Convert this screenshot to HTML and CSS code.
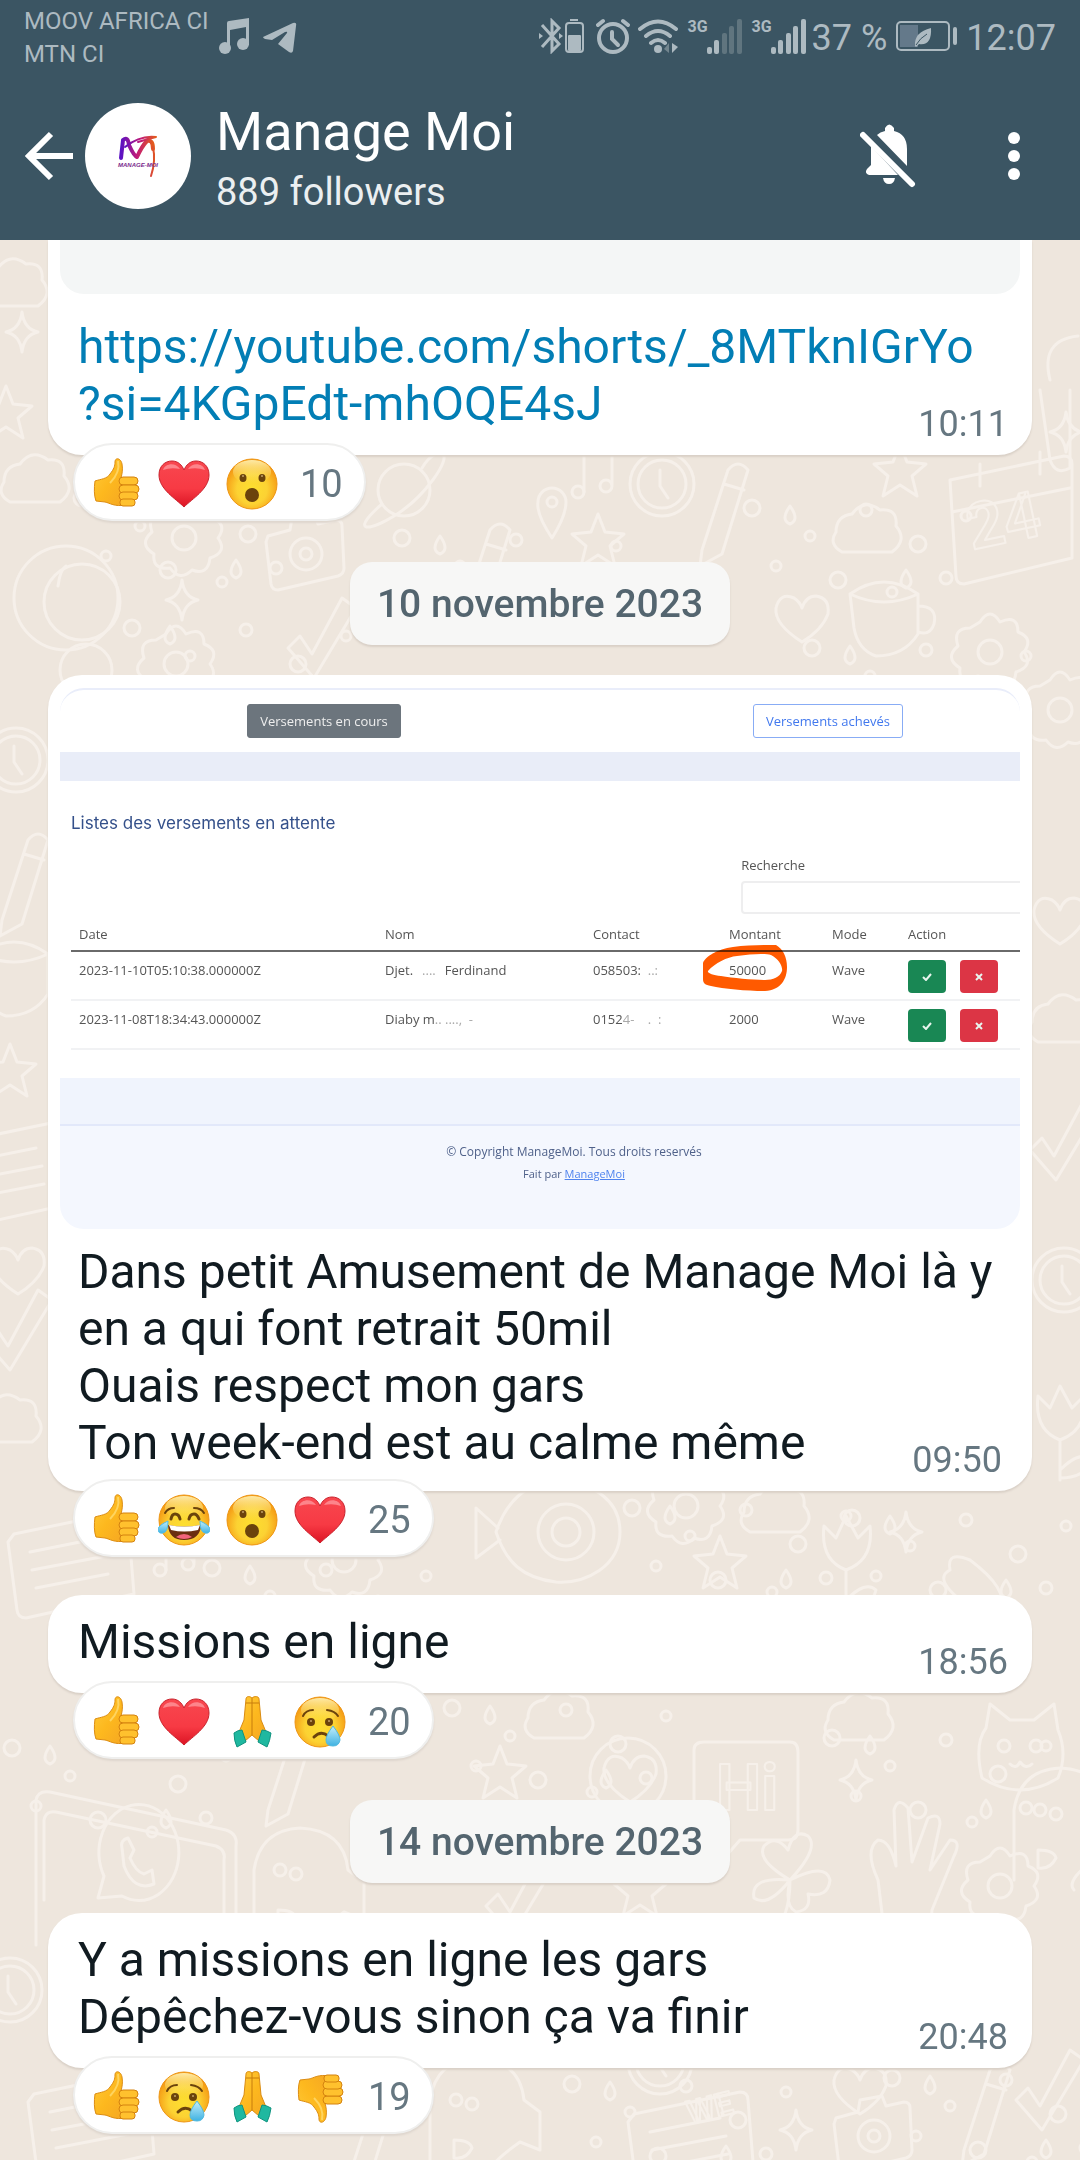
FILE: index.html
```html
<!DOCTYPE html>
<html lang="fr">
<head>
<meta charset="utf-8">
<meta name="viewport" content="width=device-width, initial-scale=1">
<title>Manage Moi</title>
<link rel="stylesheet" href="styles.css">
</head>
<body>
<svg class="defs" aria-hidden="true">
  <defs>
    <radialGradient id="face" cx=".5" cy=".6" r=".55"><stop offset="0" stop-color="#fddf2f"/><stop offset=".55" stop-color="#fcd233"/><stop offset="1" stop-color="#f59a14"/></radialGradient>
    <linearGradient id="shine" x1="0" y1="0" x2="0" y2="1"><stop offset="0" stop-color="#fff4b8" stop-opacity=".9"/><stop offset="1" stop-color="#fde75c" stop-opacity="0"/></linearGradient>
    <linearGradient id="skin" x1="0" y1="0" x2="1" y2="1"><stop offset="0" stop-color="#ffcb3a"/><stop offset=".5" stop-color="#fdb81e"/><stop offset="1" stop-color="#f5a623"/></linearGradient>
    <linearGradient id="red" x1="0" y1="0" x2="0" y2="1"><stop offset="0" stop-color="#f8474f"/><stop offset=".6" stop-color="#f73a44"/><stop offset="1" stop-color="#dc1424"/></linearGradient>
    <linearGradient id="water" x1="0" y1="0" x2="0" y2="1"><stop offset="0" stop-color="#c4eefb"/><stop offset="1" stop-color="#3fb2e2"/></linearGradient>
    <linearGradient id="brand" x1="0" y1="0" x2="1" y2="0"><stop offset="0" stop-color="#5a12c4"/><stop offset=".5" stop-color="#c11a78"/><stop offset="1" stop-color="#e35b1c"/></linearGradient>
    <symbol id="thumb" viewBox="0 0 52 52">
      <path d="M5 23C11 21 17 21 20 16C24 11 25 8 25 4C25 -1 31 0 32 6C33 12 32 16 31 20L36 21V47C24 49 20 45 15 44L6 43C4 38 4 30 5 23Z" fill="url(#skin)" stroke="#dc8c12"/>
      <path d="M28 3C30 12 26 19 20 25" fill="none" stroke="#ffe07a" stroke-width="2" opacity=".7"/>
      <g fill="#ffc12e" stroke="#d4820f" stroke-width="1"><rect x="29" y="19" width="19" height="8" rx="4"/><rect x="29" y="27" width="20" height="8" rx="4"/><rect x="29" y="34" width="19" height="8" rx="4"/><rect x="30" y="41" width="15" height="7" rx="3"/></g>
    </symbol>
    <symbol id="down" viewBox="0 0 52 52"><g transform="matrix(1 0 0 -1 0 52)"><use href="#thumb" width="52" height="52"/></g></symbol>
    <symbol id="heart" viewBox="0 0 52 52">
      <path d="M26 49C18 41 1 31 1 17C1 8 7 3 14 3C20 3 24 7 26 12C28 7 32 3 38 3C45 3 51 8 51 17C51 31 34 41 26 49Z" fill="url(#red)" stroke="#c9222c"/>
      <path d="M5 12C7 5 18 4 22 11Q13 9 5 12ZM30 11C34 4 45 5 47 12Q39 9 30 11Z" fill="#ff9ba0" opacity=".75"/>
    </symbol>
    <symbol id="ball" viewBox="0 0 52 52"><circle cx="26" cy="26" r="25" fill="url(#face)" stroke="#ee9614"/><ellipse cx="26" cy="14" rx="19" ry="12" fill="url(#shine)"/></symbol>
    <symbol id="wow" viewBox="0 0 52 52"><use href="#ball"/><g fill="#6b430c"><ellipse cx="17" cy="20" rx="3.500" ry="4"/><ellipse cx="36" cy="20" rx="3.500" ry="4"/><ellipse cx="26" cy="37" rx="7" ry="7"/></g><circle cx="17" cy="18" r="1" fill="#c2a06a"/><circle cx="36" cy="18" r="1" fill="#c2a06a"/></symbol>
    <symbol id="joy" viewBox="0 0 52 52"><use href="#ball"/>
      <g fill="none" stroke="#6b430c" stroke-width="2" stroke-linecap="round"><path d="M7 19Q10 14 16 14M36 14Q43 14 46 19"/><path d="M13 25Q14 20 17 20Q21 20 22 25M31 25Q32 20 36 20Q39 20 41 25" stroke-width="3"/></g>
      <path d="M10 31Q26 34 43 31Q42 46 26 46Q11 46 10 31Z" fill="#6b2f10"/><path d="M11 31Q26 34 42 31L40 36Q26 39 13 36Z" fill="#fff"/><path d="M18 43Q26 37 34 43Q26 47 18 43Z" fill="#f2647c"/>
      <path d="M10 27Q10 38 5 39Q0 40 0 35Q1 31 10 27ZM42 27Q42 38 47 39Q52 40 52 35Q51 31 42 27Z" fill="url(#water)" stroke="#52bde6"/>
    </symbol>
    <symbol id="cry" viewBox="0 0 52 52"><use href="#ball"/>
      <g fill="none" stroke="#6b430c" stroke-width="2" stroke-linecap="round"><path d="M9 20Q12 14 19 14M33 14Q41 15 44 20"/><path d="M20 41Q27 34 34 40" stroke-width="3"/></g>
      <g fill="#6b430c"><ellipse cx="17" cy="26" rx="4" ry="4"/><ellipse cx="35" cy="26" rx="4" ry="4"/></g><circle cx="17" cy="25" r="1" fill="#c2a06a"/><circle cx="35" cy="25" r="1" fill="#c2a06a"/>
      <path d="M39 30Q46 39 46 44Q45 50 39 50Q32 50 32 44Q32 39 39 30Z" fill="url(#water)" stroke="#52b9de"/>
    </symbol>
    <symbol id="pray" viewBox="0 0 52 52">
      <path d="M26 2C24 0 20 0 20 3L18 24L13 36L19 45L26 39L33 45L40 36L35 24L33 3C33 0 28 0 26 2Z" fill="url(#skin)" stroke="#d98b12"/><path d="M26 2V39M20 7H33" stroke="#c77c0d" fill="none"/>
      <path d="M8 37Q12 34 16 34L20 46L11 51Q8 45 8 37ZM45 37Q40 34 36 34L32 46L41 51Q44 45 45 37Z" fill="#1fb8a0" stroke="#0f937f"/>
    </symbol>
    <symbol id="bars" viewBox="0 0 36 36"><g fill="#adbac1"><rect x="1" y="29" width="5" height="7" rx="2"/><rect x="8" y="22" width="5" height="14" rx="2"/></g><g fill="currentColor"><rect x="16" y="15" width="5" height="21" rx="2"/><rect x="23" y="8" width="5" height="28" rx="2"/><rect x="31" y="1" width="5" height="35" rx="2"/></g></symbol>

    <g id="d-star"><path d="M0-26L7-8L26-6L12 6L17 26L0 15L-17 26L-12 6L-26-6L-7-8Z"/></g>
    <g id="d-spark"><path d="M0-20Q2-3 16 0Q2 3 0 20Q-2 3-16 0Q-2-3 0-20Z"/></g>
    <g id="d-planet"><circle r="26"/><path d="M-22 14C-52 40-40 44-10 26S48-32 38-36S18-22 18-22"/></g>
    <g id="d-camera"><path d="M-36-18L-14-24L-12-36L10-40L14-30L32-34Q38-34 38-28L40 14Q40 20 34 22L-26 36Q-32 36-33 30L-38-12Z"/><circle cx="2" cy="0" r="16"/><circle cx="2" cy="0" r="6"/></g>
    <g id="d-clock"><circle r="32"/><circle r="24"/><path d="M-2-14V2L6 14"/></g>
    <g id="d-cal"><path d="M-60-50L54-74Q62-74 62-66V28L-46 54Q-54 54-54 46ZM-58-18L60-42M-30-66V-44M30-78V-56"/></g>
    <g id="d-pin"><path d="M0 28Q-16 4-14-8A14 14 0 0 1 14-8Q14 6 0 28Z"/><circle cy="-8" r="5"/></g>
    <g id="d-cloud"><path d="M-26 22Q-40 14-32 2Q-32-14-16-16Q-4-32 12-20Q30-22 28-4Q40 10 24 22Z"/></g>
    <g id="d-mug"><path d="M-34-26Q0-50 34-26V14Q20 36-8 36Q-26 30-30 8ZM-34-26Q0-10 34-26M34-14Q54-14 50 4Q46 16 34 12"/></g>
    <g id="d-note"><path d="M-14 20V-24L14-30V12"/><circle cx="-20" cy="20" r="6"/><circle cx="8" cy="14" r="6"/></g>
    <g id="d-egg"><path d="M-70 0C-60-30-40-50-10-50C30-50 54-30 54 0C54 34 20 52-10 50C-44 46-60 30-70 0Z"/><circle r="28"/><circle r="14"/><path d="M-68-4L-90-24V26L-66 8"/></g>
    <g id="d-tulip"><path d="M0 20Q-26 10-22-24L-10-12L0-34L12-12L24-24Q28 10 0 20ZM0 20V60M0 50Q20 30 30 40Q26 58 0 58"/></g>
    <g id="d-heart"><path d="M0 24Q-28 6-26-10Q-22-26-8-20Q-2-16 0-10Q4-22 14-22Q28-20 26-4Q20 12 0 24Z"/></g>
    <g id="d-clover"><path d="M0 0Q-34-20-26-34Q-14-46-2-30Q4-52 18-44Q30-32 0 0Q36-18 40 0Q38 18 18 14Q22 30 6 32Q-6 26 0 0Q-22 28-36 18Q-40-4 0 0M0 0Q0 40-20 56"/></g>
    <g id="d-flower"><path d="M-10-30Q0-46 10-30Q28-38 28-20Q44-14 34 0Q44 14 26 20Q24 38 8 32Q-4 44-14 30Q-32 32-30 16Q-46 6-32-6Q-38-24-20-24Z"/><circle r="12"/></g>
    <g id="d-cat"><path d="M-38 30Q-46-4-34-20L-30-44L-10-28H14L34-44L38-18Q48 6 38 30Q0 54-38 30Z"/><circle cx="-16" cy="-2" r="6"/><circle cx="16" cy="-2" r="6"/><path d="M-10 16Q-4 22 0 14Q6 22 12 16"/></g>
    <g id="d-dino"><path d="M-50 50V-20Q-44-60-4-62Q40-60 44-20L60-8V30L40 22Q0 50 10 60"/><circle cx="-24" cy="-20" r="6"/><circle cx="-8" cy="-16" r="6"/><path d="M-26 20Q-10 20-8 28Q-14 40-26 38Z"/></g>
    <g id="d-hand"><path d="M-20 60L-26 10Q-40-20-26-30Q-14-30-8-4L-10-60Q-6-74 4-62L8-8L24-52Q36-58 36-46L26 0L46-30Q58-30 50-14L28 40L26 66Z"/></g>
    <g id="d-doc"><path d="M-56-26L50-48Q58-48 58-40L64 34L-44 58Q-52 58-53 50L-62-18ZM-40-8L30-22M-38 10L36-4M-34 28L38 14"/></g>
    <g id="d-tick"><path d="M-34 10L-22-2L-10 16L20-40L34-30L-8 40Z"/></g>
    <g id="d-pencil"><path d="M-16 40L10-40Q20-52 30-40L4 44L-18 56Z M6-26L26-20"/></g>
    <g id="d-set">
      <circle cx="12" cy="8" r="8"/><circle cx="70" cy="36" r="5"/><circle cx="126" cy="10" r="6"/><circle cx="178" cy="44" r="8"/><circle cx="226" cy="16" r="5"/><circle cx="36" cy="66" r="5"/><circle cx="98" cy="80" r="8"/><circle cx="152" cy="92" r="5"/><circle cx="206" cy="78" r="6"/><path d="M50 6Q60 20 50 24Q40 20 50 6ZM166 70Q176 84 166 88Q156 84 166 70Z"/>
    </g>
  </defs>
</svg>

<header class="top">
  <div class="status">
    <div class="carriers"><span>MOOV AFRICA CI</span><span>MTN CI</span></div>
    <svg class="s-note" viewBox="0 0 30 36" fill="#adbac1" aria-hidden="true"><path d="M8 5Q8 3 10 3L30 0V27H27V9L11 12V30H8Z"/><circle cx="6" cy="30" r="6"/><circle cx="24" cy="26" r="6"/></svg>
    <svg class="s-plane" viewBox="0 0 34 32" fill="#adbac1" aria-hidden="true"><path d="M0 15L30 1Q34 0 33 4L30 29Q29 32 26 30L15 22L24 11Q25 9 22 10L9 18L2 17Q0 16 0 15Z"/></svg>
    <div class="tray">
      <svg width="46" height="36" viewBox="0 0 46 36" aria-hidden="true"><path d="M3 7L20 26L13 33V3L20 10L3 29" fill="none" stroke="#adbac1" stroke-width="3"/><path d="M0 15L4 18L0 21ZM20 15L24 18L20 21Z" fill="#adbac1"/><rect x="27" y="5" width="17" height="29" rx="3" fill="none" stroke="#adbac1" stroke-width="2"/><rect x="29" y="17" width="13" height="16" rx="1" fill="#adbac1"/><rect x="31" y="1" width="8" height="2" fill="#adbac1"/></svg>
      <svg class="s-alarm" width="34" height="36" viewBox="0 0 34 36" aria-hidden="true"><g fill="none" stroke="#adbac1" stroke-linecap="round"><circle cx="17" cy="20" r="14" stroke-width="4"/><path d="M16 14V21L22 27" stroke-width="4"/><path d="M2 7L7 3M32 7L27 3" stroke-width="4"/></g></svg>
      <svg width="40" height="36" viewBox="0 0 40 36" aria-hidden="true"><g fill="none" stroke="#adbac1" stroke-width="4" stroke-linecap="round"><path d="M2 11Q20-4 38 11M8 18Q20 8 32 18M13 25Q20 19 27 25"/></g><circle cx="20" cy="31" r="4" fill="#adbac1"/><path d="M31 25V35L26 31Z" fill="#73868f"/><path d="M34 25V35L40 29Z" fill="#adbac1"/></svg>
      <span class="net net-weak"><b>3G</b><svg width="36" height="36" aria-hidden="true"><use href="#bars"/></svg></span>
      <span class="net"><b>3G</b><svg width="36" height="36" aria-hidden="true"><use href="#bars"/></svg></span>
      <span class="level">37 %</span>
      <svg width="62" height="32" viewBox="0 0 62 32" aria-hidden="true"><rect x="1" y="2" width="52" height="28" rx="4" fill="none" stroke="#adbac1" stroke-width="2"/><rect x="4" y="5" width="18" height="22" fill="#64798a"/><path d="M19 26Q18 12 35 8Q36 26 23 24L20 27Z" fill="#adbac1"/><path d="M20 25Q24 18 31 14" stroke="#3b5563" fill="none"/><rect x="57" y="7" width="4" height="18" rx="2" fill="#adbac1"/></svg>
      <time class="clock">12:07</time>
    </div>
  </div>
  <div class="bar">
    <button class="icon back" aria-label="Retour"><svg width="48" height="50" viewBox="0 0 48 50" aria-hidden="true"><path d="M26 3L4 25L26 47M4 25H48" fill="none" stroke="#fff" stroke-width="6"/></svg></button>
    <svg class="avatar" viewBox="0 0 106 106" aria-hidden="true">
      <circle cx="53" cy="53" r="53" fill="#fff"/>
      <g fill="none" stroke="url(#brand)" stroke-linecap="round" stroke-linejoin="round"><path d="M36 55L38 37Q43 33 44 42Q49 53 52 54Q57 43 62 38Q68 36 68 46" stroke-width="4"/><path d="M40 44Q55 32 71 34Q63 36 53 39M68 44Q71 58 66 73" stroke-width="2"/></g>
      <text x="33" y="64" class="logo-text">MANAGE-MOI</text>
    </svg>
    <div class="who"><h1>Manage Moi</h1><p>889 followers</p></div>
    <button class="icon bell" aria-label="Notifications désactivées"><svg width="56" height="64" viewBox="0 0 56 64" aria-hidden="true"><g fill="#fff"><path d="M25 7V4Q29-3 34 4V7Q47 10 47 25V42L17 11Q20 8 25 7Z"/><path d="M11 22L38 51H9Q4 49 7 45L11 41Z"/><path d="M23 54H35Q34 60 29 60Q24 60 23 54Z"/></g><path d="M3 11L52 60" stroke="#fff" stroke-width="6" stroke-linecap="round"/></svg></button>
    <button class="icon more" aria-label="Plus d’options"><svg width="12" height="50" viewBox="0 0 12 50" fill="#fff" aria-hidden="true"><circle cx="6" cy="7" r="6"/><circle cx="6" cy="25" r="6"/><circle cx="6" cy="43" r="6"/></svg></button>
  </div>
</header>

<main class="chat">
  <svg class="doodles" viewBox="0 0 1080 1920" preserveAspectRatio="xMidYMin slice" aria-hidden="true">
    <use href="#d-cloud" x="14" y="44"/><use href="#d-spark" x="22" y="92"/><use href="#d-star" x="6" y="172"/><use href="#d-cloud" x="36" y="240"/><use href="#d-flower" x="184" y="298"/><use href="#d-camera" x="304" y="314"/><use href="#d-planet" x="404" y="250"/><use href="#d-pencil" x="480" y="330"/><use href="#d-pin" x="552" y="270"/><use href="#d-star" x="598" y="300"/><use href="#d-note" x="598" y="232"/><use href="#d-clock" x="662" y="244"/><use href="#d-pencil" x="718" y="270"/><use href="#d-cloud" x="868" y="290"/><use href="#d-cal" x="1010" y="290"/><use href="#d-mug" x="884" y="380"/><use href="#d-heart" x="802" y="378"/><use href="#d-flower" x="990" y="412"/><use href="#d-tick" x="322" y="398"/><use href="#d-star" x="900" y="230"/>
    <circle cx="66" cy="358" r="52"/><circle cx="82" cy="362" r="38"/><path d="M58 346Q60 330 66 326"/><circle cx="86" cy="430" r="26"/><use href="#d-flower" x="176" y="424"/><use href="#d-spark" x="182" y="360"/><use href="#d-spark" x="1066" y="192"/>
    <use href="#d-set" x="70" y="250"/><use href="#d-set" x="390" y="290"/><use href="#d-set" x="740" y="260"/><use href="#d-set" x="800" y="400"/><use href="#d-set" x="120" y="380"/>
    <path d="M1040 150L1050 220Q1056 236 1070 228V150M1050 140Q1040 100 1078 96"/><use href="#d-clock" x="16" y="520"/><use href="#d-pencil" x="18" y="640"/><use href="#d-mug" x="14" y="740"/><use href="#d-star" x="10" y="830"/><use href="#d-doc" x="6" y="930"/><use href="#d-heart" x="18" y="1030"/><use href="#d-tick" x="18" y="1090"/><use href="#d-cloud" x="8" y="1180"/>
    <use href="#d-flower" x="1060" y="470"/><use href="#d-cloud" x="1064" y="780"/><use href="#d-heart" x="1060" y="680"/><use href="#d-tick" x="1064" y="900"/><use href="#d-clock" x="1064" y="1040"/><use href="#d-tulip" x="1060" y="1180"/>
    <use href="#d-doc" x="70" y="1320"/><use href="#d-note" x="180" y="1310"/><use href="#d-flower" x="344" y="1320"/><use href="#d-egg" x="566" y="1292"/><use href="#d-flower" x="686" y="1266"/><use href="#d-star" x="720" y="1322"/><use href="#d-tulip" x="846" y="1310"/><use href="#d-spark" x="906" y="1292"/><path d="M974 1370Q930 1340 950 1330Q946 1310 970 1320Q1010 1350 1000 1370"/><use href="#d-cloud" x="776" y="1270"/>
    <use href="#d-set" x="620" y="1260"/><use href="#d-set" x="840" y="1270"/><use href="#d-set" x="200" y="1320"/><use href="#d-set" x="440" y="1460"/><use href="#d-set" x="820" y="1490"/><use href="#d-set" x="0" y="1500"/>
    <path d="M36 1705V1560Q38 1550 50 1552L226 1590Q238 1594 236 1606V1700M44 1660V1580Q46 1570 56 1572L216 1606Q226 1610 224 1620V1680"/><path d="M98 1658L104 1636A40 48 0 1 1 122 1656Z"/><path d="M122 1608Q120 1600 128 1598L134 1610L130 1618Q136 1632 144 1634L152 1630L154 1644Q134 1652 124 1626Z"/>
    <use href="#d-dino" x="304" y="1650"/><use href="#d-pencil" x="284" y="1530"/><circle cx="628" cy="1536" r="38"/><use href="#d-heart" x="630" y="1538"/><use href="#d-star" x="500" y="1532"/><path d="M694 1600V1510Q694 1502 704 1502H790Q798 1502 798 1512V1590Q798 1600 788 1600H740L726 1616V1600Z"/><use href="#d-spark" x="856" y="1540"/><use href="#d-cloud" x="860" y="1478"/><use href="#d-cat" x="1020" y="1508"/><use href="#d-hand" x="904" y="1630"/><use href="#d-clover" x="790" y="1640"/><use href="#d-flower" x="1000" y="1646"/><use href="#d-tick" x="520" y="1656"/><use href="#d-star" x="640" y="1650"/><use href="#d-cloud" x="560" y="1476"/><use href="#d-dino" x="1064" y="1590"/><use href="#d-clock" x="10" y="1750"/>
    <use href="#d-doc" x="90" y="1880"/><use href="#d-pencil" x="364" y="1900"/><use href="#d-dino" x="480" y="1880"/><use href="#d-clock" x="660" y="1822"/><use href="#d-doc" x="690" y="1900"/><use href="#d-spark" x="796" y="1890"/><use href="#d-camera" x="872" y="1896"/><use href="#d-heart" x="860" y="1850"/><use href="#d-pencil" x="980" y="1870"/><use href="#d-tick" x="1050" y="1850"/><use href="#d-set" x="560" y="1836"/><use href="#d-set" x="880" y="1830"/>
    <text x="972" y="310" transform="rotate(-12 972 310)">24</text><text x="716" y="1570">Hi</text><text x="690" y="1884" class="small" transform="rotate(-14 690 1884)">WE</text>
  </svg>

  <div class="feed">
    <article class="bubble first">
      <div class="preview"></div>
      <div class="body"><p class="text"><a href="https://youtube.com/shorts/_8MTknIGrYo?si=4KGpEdt-mhOQE4sJ"><span>https://youtube.com/shorts/_8MTknIGrYo</span><br><span>?si=4KGpEdt-mhOQE4sJ</span></a></p><time>10:11</time></div>
    </article>
    <button class="react"><svg><use href="#thumb"/></svg><svg><use href="#heart"/></svg><svg><use href="#wow"/></svg><span>10</span></button>

    <div class="date">10 novembre 2023</div>

    <article class="bubble media">
      <section class="shot">
        <div class="tabs"><button class="tab on">Versements en cours</button><button class="tab">Versements achevés</button></div>
        <div class="panel">
          <h2>Listes des versements en attente</h2>
          <div class="search"><label for="q">Recherche</label><input id="q" type="text"></div>
          <table>
            <colgroup><col class="c-date"><col class="c-name"><col class="c-tel"><col class="c-sum"><col class="c-mode"><col></colgroup>
            <thead><tr><th>Date</th><th>Nom</th><th>Contact</th><th>Montant</th><th>Mode</th><th>Action</th></tr></thead>
            <tbody>
              <tr><td>2023-11-10T05:10:38.000000Z</td><td><span class="split"><span>Djet.</span><span class="faint">....</span><span>Ferdinand</span></span></td><td>058503: <span class="faint">&nbsp;..:</span></td><td class="sum">50000<svg class="ring" viewBox="0 0 84 46" aria-hidden="true"><path fill="#ff5a00" fill-rule="evenodd" d="M0 18C2 12 14 4 30 2C45 0 65 0 73 0C80 4 84 12 84 22C84 34 78 45 62 46C45 46 20 44 8 41C2 40 0 38 0 34ZM5 26C12 18 24 12 34 11C48 9 62 8 68 10C76 14 80 22 79 26C77 32 70 35 62 35C50 35 30 33 18 31C10 30 4 28 5 26Z"/></svg></td><td>Wave</td><td><span class="acts"><button class="ok" aria-label="Valider"><svg viewBox="0 0 10 8"><path d="M1 4L4 7L9 1"/></svg></button><button class="no" aria-label="Refuser"><svg viewBox="0 0 8 8"><path d="M1 1L7 7M7 1L1 7"/></svg></button></span></td></tr>
              <tr><td>2023-11-08T18:34:43.000000Z</td><td>Diaby m<span class="faint">..&nbsp;....,&nbsp; -</span></td><td>0152<span class="faint">4-&nbsp; &nbsp; . &nbsp;:</span></td><td>2000</td><td>Wave</td><td><span class="acts"><button class="ok" aria-label="Valider"><svg viewBox="0 0 10 8"><path d="M1 4L4 7L9 1"/></svg></button><button class="no" aria-label="Refuser"><svg viewBox="0 0 8 8"><path d="M1 1L7 7M7 1L1 7"/></svg></button></span></td></tr>
            </tbody>
          </table>
        </div>
        <footer><p>© Copyright ManageMoi. Tous droits reservés</p><p class="by">Fait par <a href="#">ManageMoi</a></p></footer>
      </section>
      <div class="body"><p class="text">Dans petit Amusement de Manage Moi là y en a qui font retrait 50mil<br>Ouais respect mon gars<br>Ton week-end est au calme même</p><time>09:50</time></div>
    </article>
    <button class="react"><svg><use href="#thumb"/></svg><svg><use href="#joy"/></svg><svg><use href="#wow"/></svg><svg><use href="#heart"/></svg><span>25</span></button>

    <article class="bubble">
      <div class="body"><p class="text">Missions en ligne</p><time>18:56</time></div>
    </article>
    <button class="react"><svg><use href="#thumb"/></svg><svg><use href="#heart"/></svg><svg><use href="#pray"/></svg><svg><use href="#cry"/></svg><span>20</span></button>

    <div class="date">14 novembre 2023</div>

    <article class="bubble">
      <div class="body"><p class="text">Y a missions en ligne les gars<br>Dépêchez-vous sinon ça va finir</p><time>20:48</time></div>
    </article>
    <button class="react"><svg><use href="#thumb"/></svg><svg><use href="#cry"/></svg><svg><use href="#pray"/></svg><svg><use href="#down"/></svg><span>19</span></button>
  </div>
</main>
</body>
</html>
```
FILE: styles.css
```css
* { box-sizing: border-box; }
body { margin: 0; min-height: 100vh; display: flex; flex-direction: column; font-family: Roboto, sans-serif; color: #111b21; background: #eee6dd; }
h1, h2, p { margin: 0; font-weight: 400; }
button { font: inherit; margin: 0; padding: 0; border: 0; background: none; }
svg { display: block; flex: none; }
.defs { position: absolute; width: 0; height: 0; }

/* header */
.top { background: #3b5563; color: #fff; position: relative; z-index: 2; }
.status { display: flex; align-items: flex-start; height: 72px; padding: 18px 24px 0; color: #adbac1; }
.carriers { display: flex; flex-direction: column; font-size: 24px; line-height: 33px; margin-top: -13px; }
.s-note { width: 30px; height: 36px; margin-left: 10px; }
.s-plane { width: 34px; height: 32px; margin: 4px 0 0 14px; }
.tray { display: flex; align-items: center; margin-left: auto; height: 36px; }
.s-alarm { margin: 0 8px 0 11px; }
.net { display: flex; align-items: flex-start; color: #adbac1; margin-left: 10px; }
.net b { font-size: 16px; line-height: 18px; width: 18px; }
.net-weak { color: #60757f; }
.net-weak b { color: #adbac1; }
.level { font-size: 36px; line-height: 36px; margin: 4px 9px 0 6px; }
.clock { font-size: 36px; line-height: 36px; margin: 4px 0 0 8px; }
.bar { display: flex; align-items: center; height: 168px; padding: 0 60px 0 25px; }
.icon { display: flex; align-items: center; }
.avatar { width: 106px; height: 106px; margin-left: 12px; }
.logo-text { font: italic bold 6px "Liberation Sans", sans-serif; fill: #7a2a8c; }
.who { flex: 1; margin: 6px 0 0 25px; }
.who h1 { font-size: 54px; line-height: 60px; }
.who p { font-size: 38px; line-height: 48px; padding-top: 6px; color: #ebeff1; }
.bell { margin-right: 92px; }

/* conversation */
.chat { flex: 1; position: relative; overflow: hidden; }
.doodles { position: absolute; inset: 0; width: 100%; height: 100%; fill: none; stroke: #f6f0ea; stroke-width: 3; stroke-linejoin: round; stroke-linecap: round; }
.doodles text { font: bold 64px Roboto, sans-serif; stroke-width: 2; }
.doodles .small { font-size: 32px; }
.feed { position: relative; display: flex; flex-direction: column; padding: 0 48px 25px; }
.bubble { background: #fff; border-radius: 34px; box-shadow: 0 2px 2px #d9d0c7; }
.first { border-radius: 0 0 34px 34px; }
.preview { height: 54px; margin: 0 12px 6px; background: #f4f6f6; border-radius: 0 0 24px 24px; }
.body { display: grid; }
.body > * { grid-area: 1 / 1; }
.text { padding: 18px 24px 23px 30px; font-size: 48px; line-height: 57px; }
.text a { color: #027eb5; text-decoration: none; }
.body time { justify-self: end; align-self: end; margin: 0 24px 10px 0; font-size: 36px; line-height: 42px; color: #667781; }
.react { align-self: flex-start; display: flex; align-items: center; gap: 16px; height: 78px; margin: -12px 0 38px 25px; padding: 4px 21px 0 15px; background: #fff; border: 2px solid #efefee; border-radius: 39px; box-shadow: 0 2px 2px #ded6ce; }
.react svg { width: 52px; height: 52px; }
.react span { padding-left: 6px; font-size: 38px; line-height: 44px; color: #667781; }
.react:last-child { margin-bottom: 0; }
.date { align-self: center; margin: 3px 0 30px; height: 83px; padding: 1px 27px 0; border-radius: 22px; background: #f7f7f6; box-shadow: 0 2px 2px #d9d0c7; font-size: 39px; line-height: 83px; font-weight: 500; color: #54656f; }

/* shared picture */
.media { padding-top: 13px; }
.media .text { padding: 14px 24px 20px 30px; }
.media time { margin-right: 30px; }
.shot { margin: 0 12px; overflow: hidden; border-radius: 24px; background: #fff; border-top: 2px solid #e9edfa; font: 13px/20px "Open Sans", sans-serif; color: #555; }
.tabs { display: grid; grid-template-columns: 55% 50%; justify-items: center; padding: 14px 0; }
.tab { height: 34px; padding: 0 12px; border: 1px solid #88acf5; border-radius: 3px; color: #4178ee; white-space: nowrap; }
.on { background: #6c757d; border-color: #6c757d; color: #eee; }
.panel { border-top: 29px solid #e9edf8; padding: 28px 0 28px 11px; }
.panel h2 { font: 17px/28px Inter, sans-serif; color: #34508a; }
.search { display: flex; flex-direction: column; margin: 18px -20px 8px calc(70% + 6px); }
.search label { line-height: 20px; padding-bottom: 6px; }
.search input { height: 33px; width: 100%; border: 2px solid #eeeeef; border-radius: 4px; background: #fff; }
table { width: 100%; table-layout: fixed; border-collapse: collapse; }
.c-date { width: 306px; }
.c-name { width: 208px; }
.c-tel { width: 136px; }
.c-sum { width: 103px; }
.c-mode { width: 76px; }
th { height: 29px; padding: 0 0 4px 8px; text-align: left; font-weight: 400; border-bottom: 2px solid #6a6a6a; }
td { height: 49px; padding: 8px 0 0 8px; vertical-align: top; white-space: nowrap; border-bottom: 2px solid #f1f2f4; }
td, th { line-height: 20px; }
.split { display: flex; gap: 9px; }
.faint { color: #aaa; }
.sum { position: relative; }
.ring { position: absolute; left: -18px; top: -7px; width: 84px; height: 46px; mix-blend-mode: multiply; }
.acts { display: flex; gap: 14px; }
.acts button { display: flex; align-items: center; justify-content: center; width: 38px; height: 33px; border-radius: 4px; }
.acts svg { width: 10px; height: 8px; fill: none; stroke: #e8f5ee; stroke-width: 2; }
.ok { background: #198754; }
.no { background: #dc3545; }
.shot footer { border-top: 46px solid #f0f4fd; height: 151px; background: #f4f7fe; text-align: center; font-size: 12px; line-height: 22px; color: #4f618a; }
.shot footer p { padding-left: 68px; }
.shot footer p:first-child { border-top: 2px solid #e2e8fa; padding-top: 15px; }
.shot footer a { color: #4f83ee; }
.shot .by { font-size: 11px; }
```
